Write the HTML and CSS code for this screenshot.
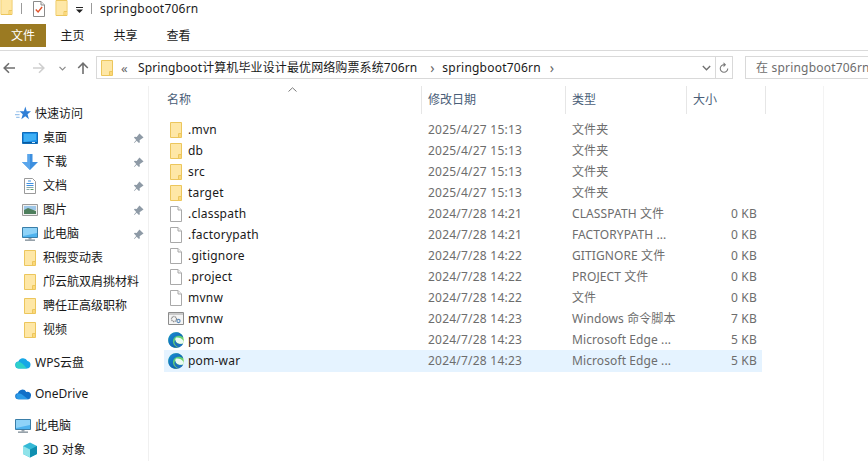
FILE: index.html
```html
<!DOCTYPE html>
<html lang="zh">
<head>
<meta charset="utf-8">
<title>springboot706rn</title>
<link rel="stylesheet" href="styles.css">
</head>
<body>
<svg class="defs" width="0" height="0">
  <defs>
    <symbol id="folder" viewBox="0 0 12 16">
      <path d="M.5.5h11v15H.5z" fill="#fde08f" stroke="#ecc65c"/>
      <path d="M1 1h10v14H1z" fill="#fee7a6"/>
      <path d="M8.500 15.500v-4h3" fill="none" stroke="#ecc65c"/>
      <path d="M9 12h2v3H9z" fill="#fcd879"/>
    </symbol>
    <symbol id="page" viewBox="0 0 12 16">
      <path d="M.5.5h7.500l3.500 3.500v11.500H.5z" fill="#fff" stroke="#a9a9a9"/>
      <path d="M8 .5v3.500h3.500" fill="#f3f3f3" stroke="#a9a9a9"/>
    </symbol>
    <symbol id="script" viewBox="0 0 16 14">
      <path d="M.5.5h15v12H.5z" fill="#f4f4f4" stroke="#8c8c8c"/>
      <path d="M1 1h14v2H1z" fill="#c9c9c9"/>
      <circle cx="6" cy="7" r="2.500" fill="none" stroke="#8a8a8a" stroke-width="1.300" stroke-dasharray="1.200 .6"/>
      <circle cx="10.500" cy="9" r="1.600" fill="none" stroke="#5b89b8" stroke-width="1.100"/>
    </symbol>
    <linearGradient id="edgeA" x1="0" y1="0" x2="1" y2="1">
      <stop offset="0" stop-color="#35c1a0"/><stop offset="1" stop-color="#8ddb4c"/>
    </linearGradient>
    <linearGradient id="edgeB" x1="0" y1="0" x2="1" y2="1">
      <stop offset="0" stop-color="#1a8fd8"/><stop offset="1" stop-color="#0a4f9e"/>
    </linearGradient>
    <symbol id="edge" viewBox="0 0 16 16">
      <circle cx="8" cy="8" r="7.800" fill="url(#edgeA)"/>
      <path d="M.3 8.500C.3 3.500 4 .2 8 .2c3.500 0 6.500 2 7.300 5.300C13.500 3.800 11 3.500 9 4 6 4.800 4.600 7.500 5 10.200c.4 2.800 2.800 5 5.800 5.300C5 17 .3 13.500.3 8.500z" fill="url(#edgeB)"/>
      <path d="M8 5.500c2.500-.5 6 .5 7.600 3.500 0 1-.2 1.700-.6 2.400-1.500.5-3.500.5-5-.2C7.500 10.500 6.500 7.500 8 5.500z" fill="#eafaf2"/>
      <path d="M7.300 8c.2 2 1.700 3.300 3.200 3.800 1.500.4 3.300.3 4.700-.3-1 2-2.500 3.400-4.300 3.900-2-.4-4.300-2.500-4.500-4.700-.1-1.100.3-2.100.9-2.700z" fill="#1e6fc0"/>
    </symbol>
    <symbol id="pin" viewBox="0 0 12 12">
      <path d="M7 .5l4.500 4.500-1.300.6-3 2.400.3 2-1 1-2.500-2.500L1.500 11 1 10.500l2.500-3L1 5l1-1 2 .3 2.400-3z" fill="#8e9aa6"/>
    </symbol>
    <symbol id="monitor" viewBox="0 0 16 16">
      <path d="M.5 1.500h15v10H.5z" fill="#4fb3ee" stroke="#3a7ea8"/>
      <path d="M1 2h14v5L1 10z" fill="#8fd3f8"/>
      <path d="M6.500 12h3v1.500h-3z" fill="#9aa5ad"/>
      <path d="M3 13.500h10v1.300H3z" fill="#7d8b95"/>
    </symbol>
  </defs>
</svg>

<header class="titlebar">
  <svg class="ti ti-folder1"><use href="#folder"/></svg>
  <span class="ti-sep"></span>
  <svg class="ti ti-check" viewBox="0 0 12 16">
    <path d="M.5.5h7.500l3.500 3.500v11.500H.5z" fill="#fff" stroke="#8b8b8b"/>
    <path d="M8 .5v3.500h3.500" fill="#eee" stroke="#8b8b8b"/>
    <path d="M2.800 8.500l2.300 2.500 4-5" fill="none" stroke="#e0532c" stroke-width="1.400"/>
  </svg>
  <svg class="ti ti-folder2"><use href="#folder"/></svg>
  <svg class="ti-drop" viewBox="0 0 9 6"><path d="M1 0h7v1H1z" fill="#222"/><path d="M1 2.500h7L4.500 6z" fill="#222"/></svg>
  <span class="ti-sep ti-sep2"></span>
  <span class="ti-title latin">springboot706rn</span>
</header>

<nav class="ribbon">
  <span class="tab tab-file">文件</span>
  <span class="tab">主页</span>
  <span class="tab">共享</span>
  <span class="tab">查看</span>
</nav>

<section class="navbar">
  <svg class="nav-ico nav-back" viewBox="0 0 12 12"><path d="M12 6H1.500M6 1.200L1.200 6 6 10.800" fill="none" stroke="#6f6f6f" stroke-width="1.600"/></svg>
  <svg class="nav-ico nav-fwd" viewBox="0 0 12 12"><path d="M0 6h10.500M6 1.200L10.800 6 6 10.800" fill="none" stroke="#cfcfcf" stroke-width="1.600"/></svg>
  <svg class="nav-chev" viewBox="0 0 7 5"><path d="M.5 .8L3.500 3.800 6.500 .8" fill="none" stroke="#8a8a8a" stroke-width="1.200"/></svg>
  <svg class="nav-ico nav-up" viewBox="0 0 12 12"><path d="M6 12V1.500M1.200 6L6 1.200 10.800 6" fill="none" stroke="#6f6f6f" stroke-width="1.600"/></svg>
  <div class="address">
    <svg class="addr-folder"><use href="#folder"/></svg>
    <span class="addr-more">«</span>
    <span class="crumb">Springboot计算机毕业设计最优网络购票系统706rn</span>
    <span class="addr-arrow">›</span>
    <span class="crumb latin">springboot706rn</span>
    <span class="addr-arrow addr-arrow2">›</span>
    <span class="addr-grow"></span>
    <svg class="addr-down" viewBox="0 0 9 6"><path d="M.8 1L4.500 4.800 8.200 1" fill="none" stroke="#6f6f6f" stroke-width="1.300"/></svg>
    <span class="addr-refresh">
      <svg viewBox="0 0 12 14" width="10" height="12"><path d="M6 3a4.500 4.500 0 1 0 4.500 4.500" fill="none" stroke="#7a7a7a" stroke-width="1.300"/><path d="M5.500 0v6l3-3z" fill="#7a7a7a"/></svg>
    </span>
  </div>
  <div class="search">在 springboot706rn</div>
</section>

<main class="main">
  <aside class="sidebar">
    <div class="side-row top first">
      <svg class="side-top-ico" viewBox="0 0 14 14"><path d="M9 .5l1.300 4 3.700.2-3 2.500 1.200 4.300L9 9 5.500 11.500 6.800 7.200 4 4.700l3.800-.2z" fill="#2f7fd6"/><path d="M1 5h3M0 7.500h4M1 10h3" stroke="#9cc4ec"/></svg>
      <span>快速访问</span>
    </div>
    <div class="side-row">
      <svg class="side-ico" viewBox="0 0 16 16"><path d="M.5 2.500h15v11H.5z" fill="#1e8fe6" stroke="#0f6cb8"/><path d="M2 4h12v6L2 12z" fill="#3fb0f5"/><path d="M1 12h14v1H1z" fill="#0a5a9e"/><path d="M10 12h3v1h-3z" fill="#cfe9fb"/></svg>
      <span class="side-label">桌面</span><svg class="pin"><use href="#pin"/></svg>
    </div>
    <div class="side-row">
      <svg class="side-ico" viewBox="0 0 16 16"><path d="M5.500 0h5v8H16l-8 8-8-8h5.500z" fill="#3d8fdf"/><path d="M5.500 0H8v16L0 8h5.500z" fill="#5aa6ec"/></svg>
      <span class="side-label">下载</span><svg class="pin"><use href="#pin"/></svg>
    </div>
    <div class="side-row">
      <svg class="side-ico" viewBox="0 0 16 16"><path d="M2.500 .5h8l3 3v12h-11z" fill="#fff" stroke="#9a9a9a"/><path d="M6 3h3M4.500 5.500h7M4.500 7.500h7" stroke="#3d8fdf"/><path d="M4.500 9.500h7M4.500 11.500h3" stroke="#8aa"/><path d="M8.500 11.500h3" stroke="#5b9b6a"/></svg>
      <span class="side-label">文档</span><svg class="pin"><use href="#pin"/></svg>
    </div>
    <div class="side-row">
      <svg class="side-ico" viewBox="0 0 16 16"><path d="M.5 2.500h15v11H.5z" fill="#f1f1f1" stroke="#9b9b9b"/><path d="M2 4h12v4H2z" fill="#9ec7e8"/><path d="M2 8l4-2 8 3v3H2z" fill="#4e7f5d"/></svg>
      <span class="side-label">图片</span><svg class="pin"><use href="#pin"/></svg>
    </div>
    <div class="side-row">
      <svg class="side-ico"><use href="#monitor"/></svg>
      <span class="side-label">此电脑</span><svg class="pin"><use href="#pin"/></svg>
    </div>
    <div class="side-row"><svg class="side-ico side-folder"><use href="#folder"/></svg><span class="side-label">积假变动表</span></div>
    <div class="side-row"><svg class="side-ico side-folder"><use href="#folder"/></svg><span class="side-label">邝云航双肩挑材料</span></div>
    <div class="side-row"><svg class="side-ico side-folder"><use href="#folder"/></svg><span class="side-label">聘任正高级职称</span></div>
    <div class="side-row"><svg class="side-ico side-folder"><use href="#folder"/></svg><span class="side-label">视频</span></div>
    <div class="side-row top gap-wps">
      <svg class="side-top-ico" viewBox="0 0 16 12"><path d="M4 11.500a3.500 3.500 0 0 1-.6-7A5 5 0 0 1 12.500 4a3.800 3.800 0 0 1-.5 7.500z" fill="#17a7e6"/><path d="M4 11.500a3.500 3.500 0 0 1-1-6.800c3 0 6 3 9 6.800z" fill="#2ed0c8"/></svg>
      <span>WPS云盘</span>
    </div>
    <div class="side-row top gap-one">
      <svg class="side-top-ico" viewBox="0 0 16 11"><path d="M3.500 10.800a3 3 0 0 1-.6-6A4.500 4.500 0 0 1 11.300 3.500 3.500 3.500 0 0 1 15.800 8a3 3 0 0 1-2 2.800z" fill="#1170c8"/><path d="M3.500 10.800a3 3 0 0 1-1-5.500c1.500-.7 3-.4 4.200 .5l6.500 5z" fill="#2b9be8"/></svg>
      <span>OneDrive</span>
    </div>
    <div class="side-row top gap-pc">
      <svg class="side-top-ico"><use href="#monitor"/></svg>
      <span>此电脑</span>
    </div>
    <div class="side-row">
      <svg class="side-ico" viewBox="0 0 16 16"><path d="M8 .5l7 3.500v8l-7 3.500L1 12V4z" fill="#35b9d6"/><path d="M8 7.500l7-3.500v8l-7 3.500z" fill="#0f8fb0"/><path d="M1 4l7 3.500v8L1 12z" fill="#8fe3ea"/></svg>
      <span class="side-label">3D 对象</span>
    </div>
  </aside>

  <section class="content">
    <div class="cols colhead">
      <span class="hcell">名称</span>
      <span class="hcell">修改日期</span>
      <span class="hcell">类型</span>
      <span class="hcell">大小</span>
      <svg class="sort" viewBox="0 0 9 5"><path d="M.5 4.500L4.500 .8l4 3.700" fill="none" stroke="#7a7a7a"/></svg>
      <span class="hextra"></span>
    </div>
    <div class="files">
      <div class="cols row"><span class="name"><svg class="fi"><use href="#folder"/></svg>.mvn</span><span class="date">2025/4/27 15:13</span><span class="type">文件夹</span><span class="size"></span></div>
      <div class="cols row"><span class="name"><svg class="fi"><use href="#folder"/></svg>db</span><span class="date">2025/4/27 15:13</span><span class="type">文件夹</span><span class="size"></span></div>
      <div class="cols row"><span class="name"><svg class="fi"><use href="#folder"/></svg>src</span><span class="date">2025/4/27 15:13</span><span class="type">文件夹</span><span class="size"></span></div>
      <div class="cols row"><span class="name"><svg class="fi"><use href="#folder"/></svg>target</span><span class="date">2025/4/27 15:13</span><span class="type">文件夹</span><span class="size"></span></div>
      <div class="cols row"><span class="name"><svg class="fi"><use href="#page"/></svg>.classpath</span><span class="date">2024/7/28 14:21</span><span class="type">CLASSPATH 文件</span><span class="size">0 KB</span></div>
      <div class="cols row"><span class="name"><svg class="fi"><use href="#page"/></svg>.factorypath</span><span class="date">2024/7/28 14:21</span><span class="type">FACTORYPATH ...</span><span class="size">0 KB</span></div>
      <div class="cols row"><span class="name"><svg class="fi"><use href="#page"/></svg>.gitignore</span><span class="date">2024/7/28 14:22</span><span class="type">GITIGNORE 文件</span><span class="size">0 KB</span></div>
      <div class="cols row"><span class="name"><svg class="fi"><use href="#page"/></svg>.project</span><span class="date">2024/7/28 14:22</span><span class="type">PROJECT 文件</span><span class="size">0 KB</span></div>
      <div class="cols row"><span class="name"><svg class="fi"><use href="#page"/></svg>mvnw</span><span class="date">2024/7/28 14:22</span><span class="type">文件</span><span class="size">0 KB</span></div>
      <div class="cols row"><span class="name"><svg class="fi fi-wide"><use href="#script"/></svg>mvnw</span><span class="date">2024/7/28 14:23</span><span class="type">Windows 命令脚本</span><span class="size">7 KB</span></div>
      <div class="cols row"><span class="name"><svg class="fi fi-wide fi-edge"><use href="#edge"/></svg>pom</span><span class="date">2024/7/28 14:23</span><span class="type">Microsoft Edge ...</span><span class="size">5 KB</span></div>
      <div class="cols row selected"><span class="name"><svg class="fi fi-wide fi-edge"><use href="#edge"/></svg>pom-war</span><span class="date">2024/7/28 14:23</span><span class="type">Microsoft Edge ...</span><span class="size">5 KB</span></div>
    </div>
  </section>
</main>
</body>
</html>
```

FILE: styles.css
```css
* { box-sizing: border-box; }
html, body { margin: 0; height: 100%; }
body {
  width: 868px;
  height: 461px;
  overflow: hidden;
  background: #fff;
  color: #1a1a1a;
  font: 12px/16px "Noto Sans", "Noto Sans CJK SC", sans-serif;
  display: flex;
  flex-direction: column;
}
.defs { position: absolute; }
svg { display: block; flex: none; }
.latin { letter-spacing: .22px; }

.titlebar { height: 24px; display: flex; align-items: flex-start; flex: none; }
.ti { width: 13px; height: 16px; }
.ti-folder1 { margin-top: -1px; }
.ti-sep { width: 1px; height: 11px; background: #9a9a9a; margin: 3px 0 0 8px; }
.ti-check { margin: 1px 0 0 11px; width: 12px; }
.ti-folder2 { margin: 0 0 0 10px; }
.ti-drop { width: 9px; height: 6px; margin: 7px 0 0 7px; }
.ti-sep2 { margin-left: 7px; }
.ti-title { margin: 1px 0 0 8px; font-size: 12px; color: #1c1c1c; }

.ribbon { height: 27px; display: flex; align-items: flex-start; border-bottom: 1px solid #dadada; flex: none; }
.tab { width: 53px; height: 23px; line-height: 23px; text-align: center; }
.tab-file { width: 46px; background: #9b7a22; color: #fff; }

.navbar { height: 35px; display: flex; align-items: flex-start; padding-top: 5px; flex: none; }
.nav-ico { width: 12px; height: 12px; margin-top: 6px; }
.nav-back { margin-left: 3px; }
.nav-fwd { margin-left: 18px; }
.nav-chev { width: 7px; height: 5px; margin: 10px 0 0 14px; }
.nav-up { margin-left: 11px; }
.address {
  width: 637px; height: 23px; margin-left: 7px;
  border: 1px solid #d9d9d9;
  display: flex; align-items: center;
  padding-left: 4px;
  color: #1a1a1a;
  flex: none;
}
.addr-folder { width: 12px; height: 16px; }
.addr-more { margin-left: 8px; width: 17px; color: #666; font-size: 13px; }
.crumb { white-space: nowrap; letter-spacing: .11px; }
.crumb.latin { letter-spacing: .22px; }
.addr-arrow { margin: 0 0 0 13px; width: 12px; color: #666; font-size: 14px; }
.addr-arrow2 { margin-left: 9px; }
.addr-grow { flex: 1; }
.addr-down { width: 9px; height: 6px; margin-right: 4px; }
.addr-refresh { width: 17px; height: 21px; border-left: 1px solid #d9d9d9; display: flex; align-items: center; justify-content: center; }
.search {
  width: 123px; height: 23px; margin-left: 12px;
  border: 1px solid #d9d9d9; border-right: 0;
  padding-left: 10px; line-height: 22px;
  color: #6d6d6d; white-space: nowrap; overflow: hidden; letter-spacing: .2px;
  flex: none;
}

.main { flex: 1; display: flex; min-height: 0; }
.sidebar { width: 149px; flex: none; border-right: 1px solid #f0f0f0; overflow: hidden; }
.side-row { height: 24px; display: flex; align-items: center; padding-left: 22px; position: relative; white-space: nowrap; }
.side-row.top { padding-left: 15px; }
.side-row.first { margin-top: 16px; }
.side-ico { width: 16px; height: 16px; margin-right: 5px; }
.side-folder { width: 12px; margin: 0 7px 0 2px; }
.side-top-ico { width: 16px; height: 16px; margin-right: 4px; }
.side-label { flex: 1; }
.pin { width: 11px; height: 11px; margin-right: 4px; }
.gap-wps { margin-top: 9px; }
.gap-one { margin-top: 7px; }
.gap-pc { margin-top: 8px; }

.content { flex: 1; padding-left: 15px; min-width: 0; }
.cols { display: grid; }
.colhead { height: 27px; position: relative; align-items: stretch; grid-template-columns: 258px 144px 121px 79px; }
.hcell { border-right: 1px solid #e6e6e6; padding-left: 3px; line-height: 28px; color: #4a5e78; }
.hcell + .hcell { padding-left: 6px; }
.sort { position: absolute; left: 124px; top: 1px; width: 9px; height: 5px; }
.hextra { position: absolute; left: 659px; top: 0; width: 1px; height: 375px; background: #f3f3f3; }

.files { margin-top: 6px; width: 598px; }
.row { height: 21px; align-items: center; grid-template-columns: 257px 144px 121px 76px; white-space: nowrap; }
.name { display: flex; align-items: center; padding-left: 6px; letter-spacing: .22px; color: #1a1a1a; }
.fi { width: 12px; height: 16px; margin-right: 6px; }
.fi-wide { width: 16px; height: 14px; margin: 0 4px 0 -2px; }
.fi-edge { height: 16px; }
.date, .size { color: #6d6d6d; letter-spacing: .22px; padding-left: 7px; }
.type { color: #6d6d6d; padding-left: 7px; letter-spacing: .1px; }
.size { text-align: right; padding: 0 5px 0 0; }
.selected { background: #e5f3ff; height: 22px; }
```
